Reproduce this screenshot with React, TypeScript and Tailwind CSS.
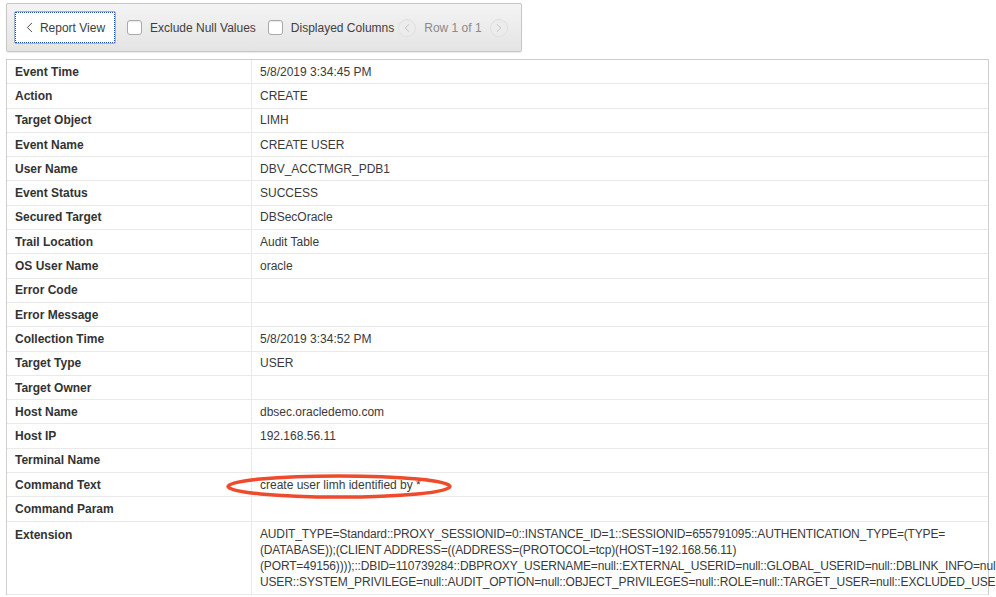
import { ChevronLeft, ChevronRight } from 'lucide-react'

const rows: [string, string][] = [
  ['Event Time', '5/8/2019 3:34:45 PM'],
  ['Action', 'CREATE'],
  ['Target Object', 'LIMH'],
  ['Event Name', 'CREATE USER'],
  ['User Name', 'DBV_ACCTMGR_PDB1'],
  ['Event Status', 'SUCCESS'],
  ['Secured Target', 'DBSecOracle'],
  ['Trail Location', 'Audit Table'],
  ['OS User Name', 'oracle'],
  ['Error Code', ''],
  ['Error Message', ''],
  ['Collection Time', '5/8/2019 3:34:52 PM'],
  ['Target Type', 'USER'],
  ['Target Owner', ''],
  ['Host Name', 'dbsec.oracledemo.com'],
  ['Host IP', '192.168.56.11'],
  ['Terminal Name', ''],
  ['Command Text', 'create user limh identified by *'],
  ['Command Param', ''],
]

const extension = [
  'AUDIT_TYPE=Standard::PROXY_SESSIONID=0::INSTANCE_ID=1::SESSIONID=655791095::AUTHENTICATION_TYPE=(TYPE=',
  '(DATABASE));(CLIENT ADDRESS=((ADDRESS=(PROTOCOL=tcp)(HOST=192.168.56.11)',
  '(PORT=49156))));::DBID=110739284::DBPROXY_USERNAME=null::EXTERNAL_USERID=null::GLOBAL_USERID=null::DBLINK_INFO=null',
  'USER::SYSTEM_PRIVILEGE=null::AUDIT_OPTION=null::OBJECT_PRIVILEGES=null::ROLE=null::TARGET_USER=null::EXCLUDED_USER',
]

function Checkbox({ label }: { label: string }) {
  return (
    <div className="flex items-center gap-[8px]">
      <span className="w-[15px] h-[15px] rounded-[3px] border border-[#a9a9a9] bg-white shadow-[inset_0_1px_1px_rgba(0,0,0,0.08)]" />
      <span className="text-[12px] text-[#404040]">{label}</span>
    </div>
  )
}

export default function App() {
  return (
    <div
      className="w-[996px] h-[597px] overflow-hidden bg-white relative"
      style={{ fontFamily: '"Liberation Sans", Arial, sans-serif' }}
    >
      {/* Toolbar */}
      <div className="pt-[3px] pl-[6px]">
        <div className="w-[516px] h-[49px] flex items-center pl-[7px] border border-[#c6c6c6] rounded-[2px] bg-gradient-to-b from-[#f4f4f4] to-[#e4e4e4] shadow-[0_1px_1px_rgba(0,0,0,0.08)]">
          <button className="h-[33px] w-[102px] flex items-center justify-center gap-[2px] bg-white border border-[#9fb3cf] outline-[1px] outline-dotted outline-[#1d4fa8] outline-offset-[-2px] rounded-[2px] text-[12px] text-[#3d3d3d]">
            <ChevronLeft className="w-[17px] h-[17px] -ml-[4px]" strokeWidth={1.3} />
            Report View
          </button>
          <div className="ml-[11px]">
            <Checkbox label="Exclude Null Values" />
          </div>
          <div className="ml-[12px]">
            <Checkbox label="Displayed Columns" />
          </div>
          <span className="ml-[4px] w-[18px] h-[18px] rounded-full bg-[#ececec] border border-[#e0e0e0] flex items-center justify-center text-[#b8b8b8]">
            <ChevronLeft className="w-[14px] h-[14px]" strokeWidth={1.4} />
          </span>
          <span className="ml-[8px] text-[12px] text-[#8a8a8a]">Row 1 of 1</span>
          <span className="ml-[8px] w-[18px] h-[18px] rounded-full bg-[#ececec] border border-[#e0e0e0] flex items-center justify-center text-[#b8b8b8]">
            <ChevronRight className="w-[14px] h-[14px]" strokeWidth={1.4} />
          </span>
        </div>
      </div>

      {/* Detail table */}
      <div className="mt-[7px] ml-[6px] w-[983px] border-t border-l border-r border-[#cfcfcf] text-[12px] text-[#333]">
        {rows.map(([label, value]) => (
          <div key={label} className="flex h-[24.3px] items-center border-b border-[#e9e9e9]">
            <div className="w-[245px] shrink-0 h-full flex items-center pl-[8px] font-bold border-r border-[#e9e9e9]">
              {label}
            </div>
            <div className="flex-1 min-w-0 pl-[8px] text-[#3a3a3a]">{value}</div>
          </div>
        ))}
        <div className="flex border-b border-[#e9e9e9]">
          <div className="w-[245px] shrink-0 pl-[8px] pt-[4px] font-bold border-r border-[#e9e9e9]">Extension</div>
          <div className="flex-1 min-w-0 pl-[8px] pt-[4px] pb-[4px] leading-[16px] text-[#3a3a3a] text-[12px] tracking-[-0.15px]">
            {extension.map((line) => (
              <div key={line} className="whitespace-nowrap">{line}</div>
            ))}
          </div>
        </div>
      </div>

      {/* red annotation around command text */}
      <svg className="absolute left-[226px] top-[473px]" width="228" height="28" viewBox="0 0 228 28">
        <ellipse cx="113" cy="13.5" rx="111" ry="10.5" fill="none" stroke="#ee4a2b" strokeWidth="3.5" />
      </svg>
    </div>
  )
}
